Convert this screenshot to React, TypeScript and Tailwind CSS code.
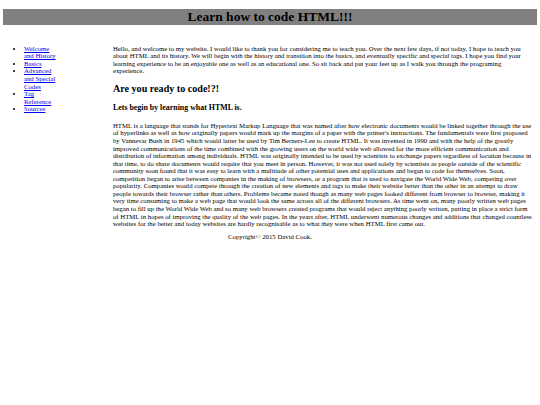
const links = ["Welcome and History", "Basics", "Advanced and Special Codes", "Tag Reference", "Sources"];

export default function App() {
  return (
    <div className="w-[540px] min-h-[405px] bg-white px-[3.4px] text-black font-['Liberation_Serif','Times_New_Roman',serif]">
      {/* header bar */}
      <h1 className="mt-[9px] h-[15.6px] bg-[#808080] flex items-center justify-center text-[13.5px] font-bold leading-none">
        Learn how to code HTML!!!
      </h1>

      <div className="flex mt-[12.5px] text-[6.75px] leading-[7.6px]">
        {/* side nav */}
        <ul className="w-[56px] shrink-0 list-disc pl-[20.6px] mt-[7.5px]">
          {links.map((l) => (
            <li key={l}>
              <a href="#" className="text-[#0000ee] underline">{l}</a>
            </li>
          ))}
        </ul>

        {/* main content */}
        <div className="ml-[53.6px] w-[419px]">
          <p className="mt-[7.5px]">
            Hello, and welcome to my website. I would like to thank you for considering me to teach you. Over the next few days, if not today, I hope to teach you about HTML and its history. We will begin with the history and transition into the basics, and eventually specific and special tags. I hope you find your learning experience to be an enjoyable one as well as an educational one. So sit back and put your feet up as I walk you through the programing experience.
          </p>
          <h2 className="mt-[8.4px] text-[10.1px] leading-[11.6px] font-bold">Are you ready to code!?!</h2>
          <h3 className="mt-[8.4px] text-[7.9px] leading-[9.1px] font-bold">Lets begin by learning what HTML is.</h3>
          <p className="mt-[9.5px] leading-[7.54px]">
            HTML is a language that stands for Hypertext Markup Language that was named after how electronic documents would be linked together through the use of hyperlinks as well as how originally papers would mark up the margins of a paper with the printer's instructions. The fundamentals were first proposed by Vannevar Bush in 1945 which would latter be used by Tim Berners-Lee to create HTML. It was invented in 1990 and with the help of the greatly improved communications of the time combined with the growing users on the world wide web allowed for the more efficient communication and distribution of information among individuals. HTML was originally intended to be used by scientists to exchange papers regardless of location because in that time, to do share documents would require that you meet in person. However, it was not used solely by scientists as people outside of the scientific community soon found that it was easy to learn with a multitude of other potential uses and applications and began to code for themselves. Soon, competition began to arise between companies in the making of browsers, or a program that is used to navigate the World Wide Web, competing over popularity. Companies would compete through the creation of new elements and tags to make their website better than the other in an attempt to draw people towards their browser rather than others. Problems became noted though as many web pages looked different from browser to browser, making it very time consuming to make a web page that would look the same across all of the different browsers. As time went on, many poorly written web pages began to fill up the World Wide Web and so many web browsers created programs that would reject anything poorly written, putting in place a strict form of HTML in hopes of improving the quality of the web pages. In the years after, HTML underwent numerous changes and additions that changed countless websites for the better and today websites are hardly recognisable as to what they were when HTML first came out.
          </p>
        </div>
      </div>

      <p className="mt-[5.5px] text-center text-[6.75px] leading-[7.6px]">Copyright© 2015 David Cook.</p>
    </div>
  );
}
